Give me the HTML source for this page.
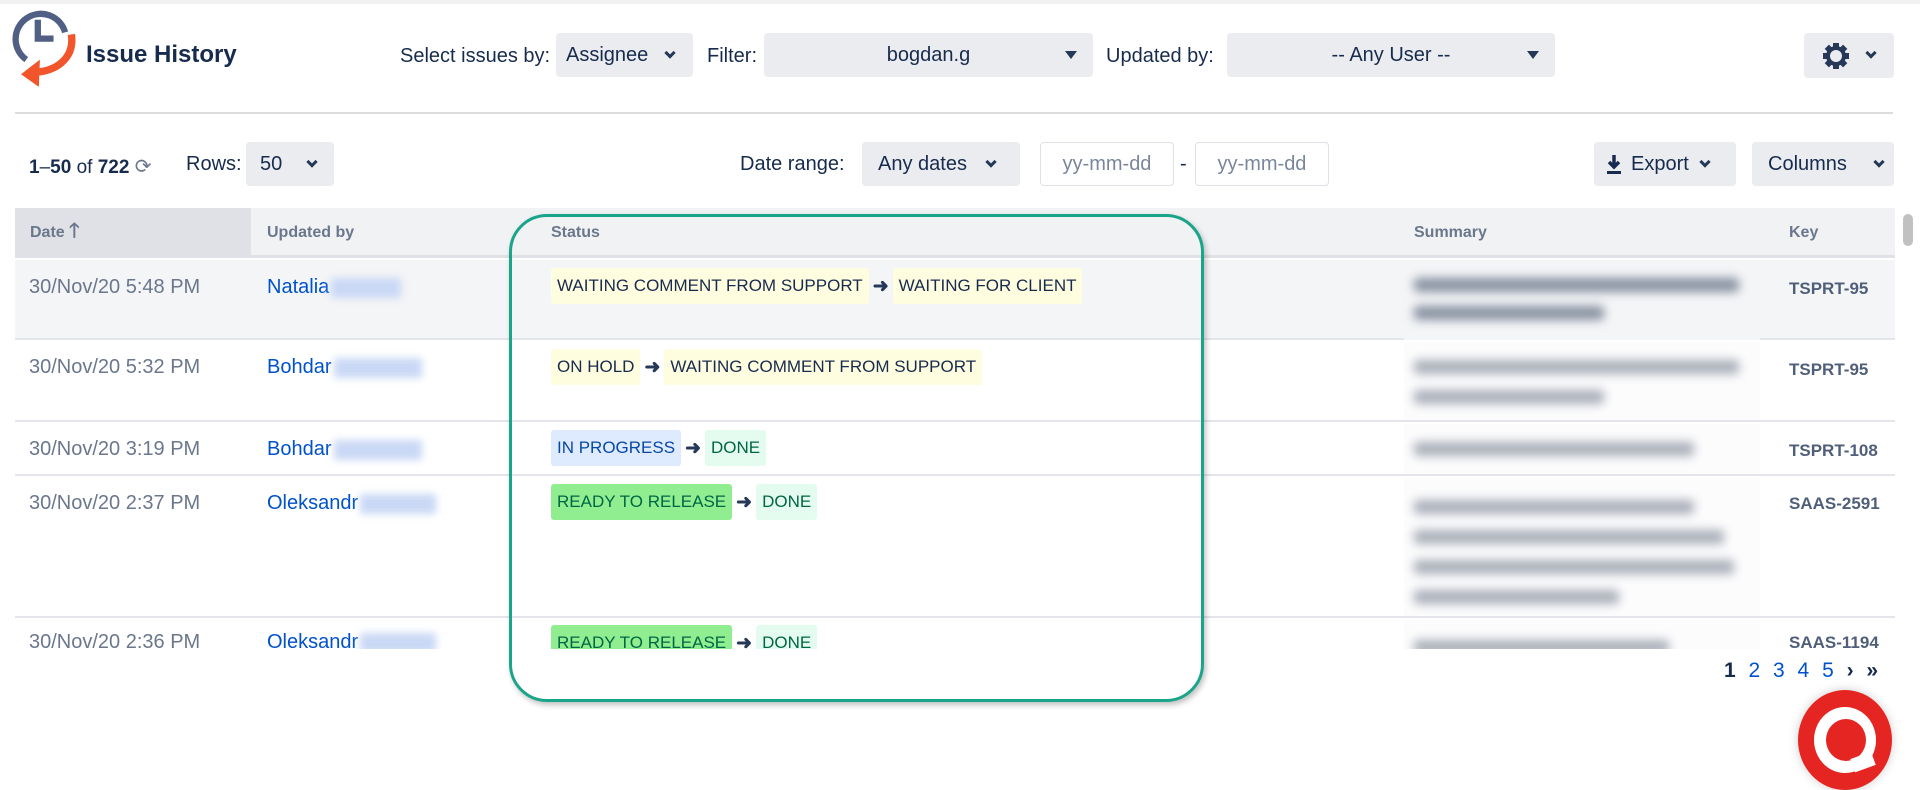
<!DOCTYPE html>
<html><head><meta charset="utf-8">
<style>
*{box-sizing:border-box;margin:0;padding:0}
body{width:1920px;height:780px;overflow:hidden;background:#fff;font-family:"Liberation Sans",sans-serif;color:#172b4d;position:relative}
.abs{position:absolute}
.btn{position:absolute;background:#ebecf0;border-radius:4px;display:flex;align-items:center;font-size:20px;color:#172b4d}
.lbl{position:absolute;font-size:20px;color:#172b4d}
.chev{display:inline-block;width:9px;height:9px;border-right:3px solid #253858;border-bottom:3px solid #253858;transform:rotate(45deg);}
.tri{display:inline-block;width:0;height:0;border-left:6px solid transparent;border-right:6px solid transparent;border-top:8px solid #253858}
.inp{position:absolute;border:1px solid #dfe1e6;border-radius:4px;background:#fff;font-size:20px;color:#7a869a;display:flex;align-items:center;justify-content:center}
.th{position:absolute;top:208px;height:50px;font-size:16px;font-weight:bold;color:#6b778c;display:flex;align-items:center}
.row{position:absolute;left:15px;width:1880px;border-bottom:2px solid #e4e5ea}
.date{position:absolute;left:29px;font-size:20px;color:#6b778c}
.name{position:absolute;left:267px;font-size:20px;color:#0052cc}
.blur{display:inline-block;background:#c9d8f5;filter:blur(4px);height:20px;vertical-align:middle;margin-left:2px}
.st{position:absolute;left:551px;display:flex;align-items:center;gap:3px}
.loz{height:36px;display:flex;align-items:center;padding:0 6px;font-size:17px;border-radius:3px;white-space:nowrap}
.y{background:#fffde0;color:#172b4d}
.b{background:#deebff;color:#0747a6}
.g{background:#90ee90;color:#064}
.lg{background:#e3fcef;color:#006644}
.arr{font-size:19px;color:#253858;font-weight:bold;padding:0 1px}
.sum{position:absolute;left:1404px;width:356px;background:#fcfcfd}
.sl{position:absolute;left:10px;height:14px;background:#a9aeb8;filter:blur(5px);border-radius:4px}
.key{position:absolute;left:1789px;font-size:17px;font-weight:bold;color:#505f79}
</style></head><body>
<div class="abs" style="left:0;top:0;width:1920px;height:4px;background:#f1f1f1"></div>
<svg class="abs" style="left:5px;top:5px" width="74" height="84" viewBox="0 0 70 80">
<path d="M20 52 A24 24 0 1 1 57 26" fill="none" stroke="#505f83" stroke-width="6"/>
<path d="M31 14 V32 H46" fill="none" stroke="#505f83" stroke-width="6"/>
<path d="M63 28 C66 48 52 62 30 64" fill="none" stroke="#f2552c" stroke-width="7"/>
<path d="M33 52 L15 66 L32 78 Z" fill="#f2552c"/>
</svg>
<div class="abs" style="left:86px;top:41px;font-size:24px;font-weight:bold;color:#172b4d">Issue History</div>

<div class="lbl" style="left:400px;top:45px">Select issues by:</div>
<div class="btn" style="left:556px;top:33px;width:137px;height:44px;padding-left:10px">Assignee<span class="chev" style="margin-left:18px;margin-top:-5px;width:8px;height:8px"></span></div>
<div class="lbl" style="left:707px;top:45px">Filter:</div>
<div class="btn" style="left:764px;top:33px;width:329px;height:44px;justify-content:center">bogdan.g<span class="tri" style="position:absolute;right:16px"></span></div>
<div class="lbl" style="left:1106px;top:45px">Updated by:</div>
<div class="btn" style="left:1227px;top:33px;width:328px;height:44px;justify-content:center">-- Any User --<span class="tri" style="position:absolute;right:16px"></span></div>
<div class="btn" style="left:1804px;top:33px;width:90px;height:45px">
<svg style="margin-left:18px" width="28" height="28" viewBox="0 0 28 28"><g fill="#253858"><circle cx="14" cy="14" r="10"/><rect x="11" y="1" width="6" height="26"/><rect x="1" y="11" width="26" height="6"/><rect x="11" y="1" width="6" height="26" transform="rotate(45 14 14)"/><rect x="11" y="1" width="6" height="26" transform="rotate(-45 14 14)"/></g><circle cx="14" cy="14" r="6" fill="#ebecf0"/></svg>
<span class="chev" style="margin-left:17px;margin-top:-5px;width:8px;height:8px"></span></div>

<div class="abs" style="left:15px;top:112px;width:1878px;height:2px;background:#dcdcdc"></div>

<div class="abs" style="left:29px;top:154px;font-size:19px"><b>1</b>–<b>50</b> of <b>722</b> <span style="color:#6b778c;font-size:20px">⟳</span></div>
<div class="lbl" style="left:186px;top:153px">Rows:</div>
<div class="btn" style="left:246px;top:142px;width:88px;height:44px;padding-left:14px">50<span class="chev" style="margin-left:26px;margin-top:-5px;width:8px;height:8px"></span></div>
<div class="lbl" style="left:740px;top:153px">Date range:</div>
<div class="btn" style="left:862px;top:142px;width:158px;height:44px;padding-left:16px">Any dates<span class="chev" style="margin-left:20px;margin-top:-5px;width:8px;height:8px"></span></div>
<div class="inp" style="left:1040px;top:142px;width:134px;height:44px">yy-mm-dd</div>
<div class="lbl" style="left:1180px;top:153px">-</div>
<div class="inp" style="left:1195px;top:142px;width:134px;height:44px">yy-mm-dd</div>
<div class="btn" style="left:1594px;top:142px;width:142px;height:44px;padding-left:12px">
<svg width="16" height="22" viewBox="0 0 16 22"><path d="M8 2V13M3 9L8 14L13 9" fill="none" stroke="#172b4d" stroke-width="3.5"/><rect x="1" y="18" width="14" height="3" fill="#172b4d"/></svg>
<span style="margin-left:9px">Export</span><span class="chev" style="margin-left:12px;margin-top:-5px;width:8px;height:8px"></span></div>
<div class="btn" style="left:1752px;top:142px;width:142px;height:44px;padding-left:16px">Columns<span class="chev" style="margin-left:28px;margin-top:-5px;width:8px;height:8px"></span></div>

<!-- table -->
<div class="abs" style="left:15px;top:208px;width:1880px;height:50px;background:#f1f2f4;border-bottom:3px solid #dfe1e6"></div>
<div class="abs" style="left:15px;top:208px;width:236px;height:50px;background:#dfe1e6"></div>
<div class="th" style="left:30px">Date&nbsp;<span style="font-size:20px">🡑</span></div>
<div class="th" style="left:267px">Updated by</div>
<div class="th" style="left:551px">Status</div>
<div class="th" style="left:1414px">Summary</div>
<div class="th" style="left:1789px">Key</div>
<div class="abs" style="left:1903px;top:214px;width:10px;height:32px;background:#c1c1c1;border-radius:5px"></div>

<div style="position:absolute;left:0;top:260px;width:1920px;height:389px;overflow:hidden">
<div class="row" style="top:0;height:80px;background:#f4f5f7"></div>
<div class="row" style="top:80px;height:82px"></div>
<div class="row" style="top:162px;height:54px"></div>
<div class="row" style="top:216px;height:142px"></div>

<div class="sum" style="top:0;height:80px;background:#f4f5f7"><div class="sl" style="top:18px;width:325px;background:#8790a0"></div><div class="sl" style="top:46px;width:190px;background:#8790a0"></div></div>
<div class="sum" style="top:82px;height:78px"><div class="sl" style="top:18px;width:325px"></div><div class="sl" style="top:48px;width:190px"></div></div>
<div class="sum" style="top:164px;height:50px"><div class="sl" style="top:18px;width:280px"></div></div>
<div class="sum" style="top:218px;height:138px"><div class="sl" style="top:22px;width:280px"></div><div class="sl" style="top:52px;width:310px"></div><div class="sl" style="top:82px;width:320px"></div><div class="sl" style="top:112px;width:205px"></div></div>
<div class="sum" style="top:360px;height:40px"><div class="sl" style="top:20px;width:255px"></div></div>

<div class="date" style="top:16px">30/Nov/20 5:48 PM</div>
<div class="name" style="top:16px">Natalia<span class="blur" style="width:70px"></span></div>
<div class="st" style="top:8px"><div class="loz y">WAITING COMMENT FROM SUPPORT</div><span class="arr">➜</span><div class="loz y">WAITING FOR CLIENT</div></div>
<div class="key" style="top:19px">TSPRT-95</div>

<div class="date" style="top:96px">30/Nov/20 5:32 PM</div>
<div class="name" style="top:96px">Bohdar<span class="blur" style="width:88px"></span></div>
<div class="st" style="top:89px"><div class="loz y">ON HOLD</div><span class="arr">➜</span><div class="loz y">WAITING COMMENT FROM SUPPORT</div></div>
<div class="key" style="top:100px">TSPRT-95</div>

<div class="date" style="top:178px">30/Nov/20 3:19 PM</div>
<div class="name" style="top:178px">Bohdar<span class="blur" style="width:88px"></span></div>
<div class="st" style="top:170px"><div class="loz b">IN PROGRESS</div><span class="arr">➜</span><div class="loz lg">DONE</div></div>
<div class="key" style="top:181px">TSPRT-108</div>

<div class="date" style="top:232px">30/Nov/20 2:37 PM</div>
<div class="name" style="top:232px">Oleksandr<span class="blur" style="width:76px"></span></div>
<div class="st" style="top:224px"><div class="loz g">READY TO RELEASE</div><span class="arr">➜</span><div class="loz lg">DONE</div></div>
<div class="key" style="top:234px">SAAS-2591</div>

<div class="date" style="top:371px">30/Nov/20 2:36 PM</div>
<div class="name" style="top:371px">Oleksandr<span class="blur" style="width:76px"></span></div>
<div class="st" style="top:365px"><div class="loz g">READY TO RELEASE</div><span class="arr">➜</span><div class="loz lg">DONE</div></div>
<div class="key" style="top:373px">SAAS-1194</div>
</div>

<div class="abs" style="left:509px;top:214px;width:695px;height:488px;border:3px solid #1aa58a;border-radius:38px;box-shadow:2px 3px 6px rgba(0,0,0,0.25)"></div>

<div class="abs" style="left:1724px;top:659px;font-size:21px;word-spacing:7px"><b style="color:#172b4d">1</b> <span style="color:#0052cc">2 3 4 5</span> <b style="color:#172b4d">› »</b></div>

<div class="abs" style="left:1798px;top:690px;width:94px;height:100px;border-radius:50%;background:#e52521;box-shadow:0 0 10px rgba(0,0,0,0.2)"></div>
<div class="abs" style="left:1814px;top:707px;width:62px;height:66px;border-radius:50%;background:#fff"></div>
<div class="abs" style="left:1826px;top:719px;width:40px;height:42px;border-radius:50%;background:#e52521"></div>
<div class="abs" style="left:1852px;top:755px;width:22px;height:14px;background:#fff;transform:rotate(-20deg)"></div>
</body></html>
